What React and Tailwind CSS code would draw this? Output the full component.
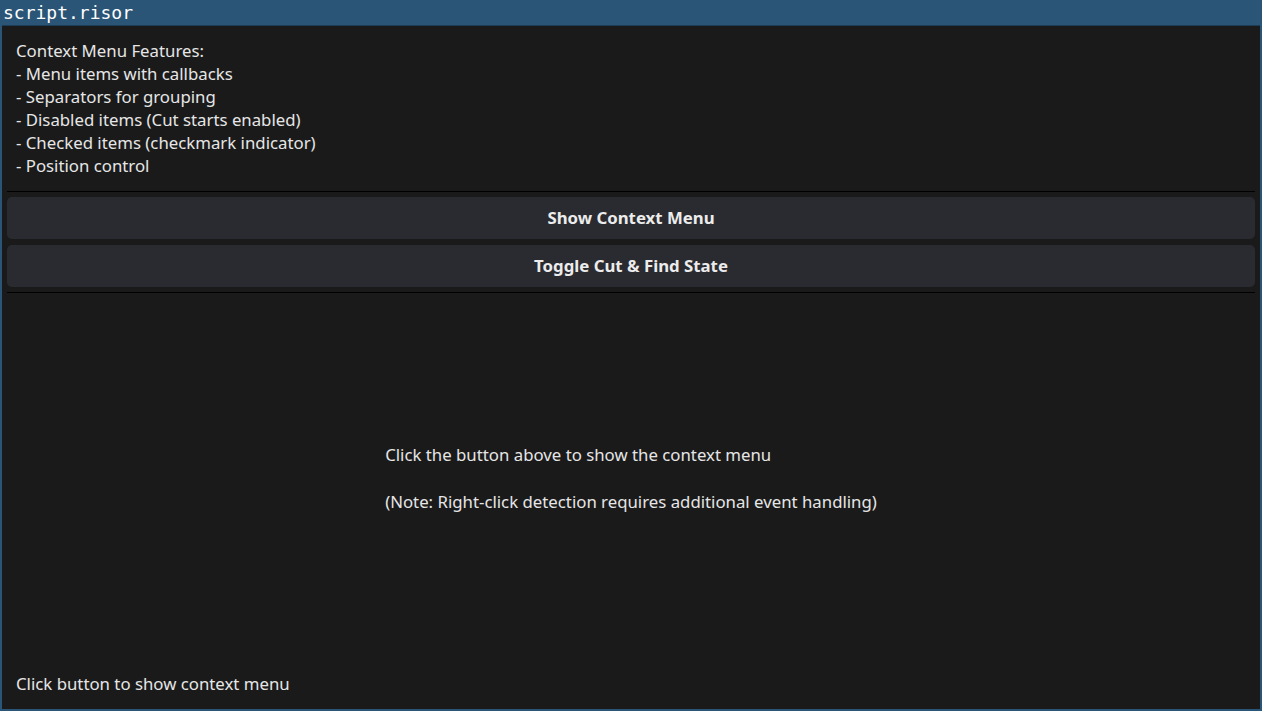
export default function App() {
  return (
    <div className="w-[1262px] h-[711px] bg-[#2a5576] flex flex-col px-[2px] pb-[2px] overflow-hidden font-['Noto_Sans',sans-serif]">
      {/* Title bar */}
      <div className="h-[26px] shrink-0 flex items-center pl-[1px] border-b border-[#1d3c55] font-['DejaVu_Sans_Mono',monospace] text-[18px] leading-none text-white">
        script.risor
      </div>

      {/* Window body */}
      <div className="flex-1 bg-[#1a1a1a] flex flex-col text-[#e6e6e6] text-[16.8px]">
        <div className="pt-[13px] pl-[14px] leading-[23px]">
          <div>Context Menu Features:</div>
          <div>- Menu items with callbacks</div>
          <div>- Separators for grouping</div>
          <div>- Disabled items (Cut starts enabled)</div>
          <div>- Checked items (checkmark indicator)</div>
          <div>- Position control</div>
        </div>

        <div className="mx-[5px] mt-[14px] border-t border-black" />

        <div className="flex flex-col gap-[6px] px-[5px] pt-[5px]">
          <button className="h-[42px] rounded-[5px] bg-[#2a2b30] font-bold text-[16.8px] text-[#ececec]">
            Show Context Menu
          </button>
          <button className="h-[42px] rounded-[5px] bg-[#2a2b30] font-bold text-[16.8px] text-[#ececec]">
            Toggle Cut &amp; Find State
          </button>
        </div>

        <div className="mx-[5px] mt-[5px] border-t border-black" />

        <div className="flex-1 flex items-center justify-center">
          <div className="flex flex-col gap-[24px] leading-[23px] pb-[9px]">
            <div>Click the button above to show the context menu</div>
            <div>(Note: Right-click detection requires additional event handling)</div>
          </div>
        </div>

        <div className="pl-[14px] pb-[14px] leading-[23px]">Click button to show context menu</div>
      </div>
    </div>
  )
}
